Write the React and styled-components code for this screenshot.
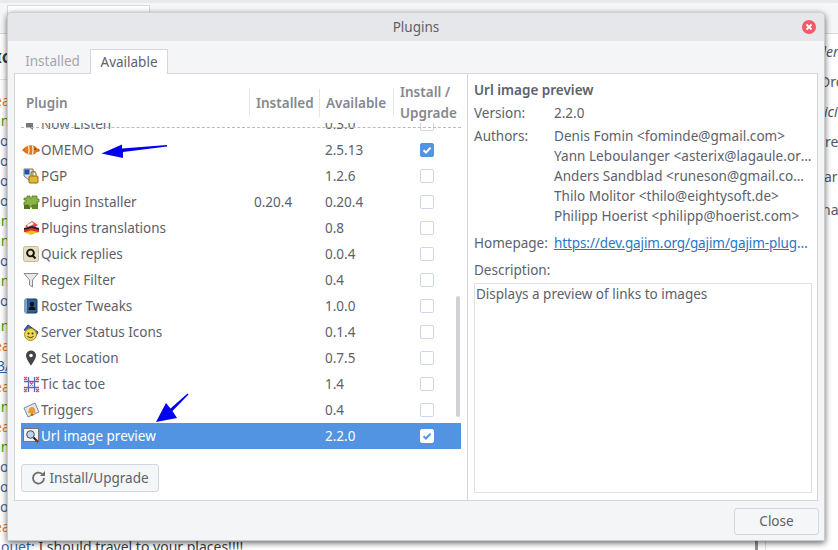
import React from "react";
import styled, { createGlobalStyle } from "styled-components";

const FONT = `"Noto Sans", sans-serif`;

const Global = createGlobalStyle`
  html, body { margin: 0; padding: 0; }
  body { width: 838px; height: 550px; overflow: hidden; background: #fff; font-family: ${FONT}; }
  * { box-sizing: border-box; }
`;

const Page = styled.div`
  position: relative;
  width: 838px;
  height: 550px;
  overflow: hidden;
  background: #fff;
  display: flex;
  flex-direction: column;
`;
const TopStrip = styled.div`
  height: 3px;
  flex: none;
  background: #e9eaec;
`;
const RoomTabs = styled.div`
  height: 31px;
  flex: none;
  background: #f5f6f7;
  border-bottom: 1px solid #d8d9dc;
  padding: 2px 0 0 7px;
`;
const RoomTab = styled.div`
  width: 143px;
  height: 28px;
  background: #fff;
  border: 1px solid #d8d9dc;
  border-bottom: 0;
`;
const RoomHead = styled.div`
  height: 46px;
  flex: none;
  border-bottom: 1px solid #e2e3e5;
  font-size: 15px;
  font-weight: 700;
  line-height: 46px;
  color: #3a3d42;
  padding-left: 0;
  margin-bottom: 11px;
  text-indent: -4px;
`;
const ChatArea = styled.div`
  flex: 1;
  min-height: 0;
  display: flex;
  justify-content: space-between;
`;
const ChatLog = styled.div`
  display: flex;
  flex-direction: column;
  width: 40px;
`;
const ChatChar = styled.div`
  height: ${p => p.$h || 20}px;
  flex: none;
  font-size: 14px;
  line-height: 20px;
  color: ${p => p.$c};
  margin-left: ${p => p.$x || 0}px;
  white-space: nowrap;
  text-decoration: ${p => p.$u ? "underline" : "none"};
`;
const RightLog = styled.div`
  position: absolute;
  left: 825px;
  top: 42px;
  width: 13px;
  display: flex;
  flex-direction: column;
  font-size: 14px;
  color: #55585f;
  line-height: 20px;
  white-space: nowrap;
`;
const RightLine = styled.div`
  height: ${p => p.$h}px;
  flex: none;
  font-style: ${p => p.$i ? "italic" : "normal"};
  margin-left: ${p => p.$x || 0}px;
`;
const BottomChat = styled.div`
  position: absolute;
  left: 1px;
  top: 537px;
  font-size: 14px;
  line-height: 20px;
  color: #3a3d42;
  white-space: nowrap;
  span { color: #3465a4; text-decoration: underline; }
`;
const BackScroll = styled.div`
  position: absolute;
  left: 755px;
  top: 535px;
  width: 11px;
  height: 15px;
  background: #fff;
  border-left: 3px solid #8f9093;
  border-right: 1px solid #dcdde0;
`;
const Dialog = styled.div`
  position: absolute;
  left: 7px;
  top: 12px;
  width: 818px;
  height: 529px;
  border-radius: 5px 5px 0 0;
  background: #f4f5f7;
  border: 1px solid #c9cacc;
  border-top-color: #cfd0d2;
  box-shadow: 0 2px 6px rgba(0,0,0,0.6);
  display: flex;
  flex-direction: column;
  color: #5c616c;
`;
const TitleBar = styled.div`
  height: 28px;
  flex: none;
  background: #e6e7ea;
  border-radius: 4px 4px 0 0;
  display: flex;
  align-items: center;
  justify-content: center;
  font-size: 13.5px;
  position: relative;
`;
const CloseDot = styled.div`
  position: absolute;
  right: 8px;
  top: 7px;
  width: 14px;
  height: 14px;
  border-radius: 50%;
  background: #f15b66;
  display: flex;
  align-items: center;
  justify-content: center;
`;
const Body = styled.div`
  flex: 1;
  min-height: 0;
  padding: 8px 6px 0 6px;
  display: flex;
  flex-direction: column;
`;
const Tabs = styled.div`
  display: flex;
  height: 24px;
  padding-left: 1px;
  flex: none;
`;
const Tab = styled.div`
  font-size: 13.5px;
  line-height: 24px;
  height: ${p => p.$active ? 25 : 24}px;
  width: ${p => p.$active ? 78 : 75}px;
  text-align: center;
  color: ${p => p.$active ? "#5c616c" : "#a3a6ac"};
  ${p => p.$active ? `
    background: #fff;
    border: 1px solid #d5d7dc;
    border-bottom: 0;
    position: relative;
    z-index: 1;
  ` : ""}
`;
const Panel = styled.div`
  height: 428px;
  flex: none;
  background: #fff;
  border: 1px solid #d5d7dc;
  display: flex;
`;
const LeftPane = styled.div`
  width: 453px;
  flex: none;
  border-right: 1px solid #d5d7dc;
  padding: 0 6px;
  display: flex;
  flex-direction: column;
  position: relative;
`;
const HeaderRow = styled.div`
  height: 49px;
  flex: none;
  display: grid;
  grid-template-columns: 228px 70px 74px 1fr;
  align-items: center;
  font-size: 13.5px;
  font-weight: 600;
  color: #85888f;
  padding-top: 8px;
`;
const HeadCell = styled.div`
  height: 28px;
  line-height: 28px;
  padding-left: ${p => p.$pad}px;
  border-left: ${p => p.$first ? "0" : "1px solid #e4e5e8"};
  white-space: nowrap;
`;
const InstallHead = styled.div`
  border-left: 1px solid #e4e5e8;
  padding-left: 6px;
  height: 28px;
  line-height: 21px;
  display: flex;
  flex-direction: column;
  justify-content: center;
  white-space: nowrap;
`;
const DropLine = styled.div`
  position: absolute;
  left: 6px;
  right: 6px;
  top: 53px;
  border-top: 1px dashed #b9bbc0;
  z-index: 2;
`;
const ListClip = styled.div`
  height: 326px;
  flex: none;
  overflow: hidden;
  position: relative;
`;
const ListInner = styled.div`
  margin-top: -12px;
`;
const Row = styled.div`
  height: 26px;
  display: grid;
  grid-template-columns: 20px 213px 71px 70px 1fr;
  align-items: center;
  font-size: 13.5px;
  color: ${p => p.$sel ? "#fff" : "#5c616c"};
  background: ${p => p.$sel ? "#5294e2" : "transparent"};
  white-space: nowrap;
`;
const IconCell = styled.div`
  display: flex;
  align-items: center;
  justify-content: center;
  height: 16px;
`;
const Cell = styled.div``;
const Check = styled.div`
  width: 14px;
  height: 14px;
  margin-left: 25px;
  border-radius: 2px;
  display: flex;
  align-items: center;
  justify-content: center;
  border: 1px solid ${p => p.$on ? "#5294e2" : "#cfd6e6"};
  background: ${p => p.$on ? "#5294e2" : "#fff"};
  ${p => p.$sel ? "border-color:#fff;background:#fff;" : ""}
`;
const ScrollThumb = styled.div`
  position: absolute;
  right: 1px;
  top: 173px;
  width: 4px;
  height: 121px;
  border-radius: 2px;
  background: #d0d1d4;
  z-index: 3;
`;
const InstallBtn = styled.button`
  margin: 15px 0 0 0;
  width: 138px;
  height: 28px;
  border: 1px solid #cfd6e6;
  border-radius: 3px;
  background: #f5f6f7;
  color: #5c616c;
  font: 400 13.5px ${FONT};
  display: flex;
  align-items: center;
  justify-content: center;
  gap: 2px;
  padding: 0;
`;
const RightPane = styled.div`
  flex: 1;
  min-width: 0;
  padding: 6px 5px 7px 6px;
  display: flex;
  flex-direction: column;
  font-size: 13.5px;
`;
const PluginName = styled.div`
  font-weight: 600;
  height: 20px;
  line-height: 20px;
`;
const InfoRow = styled.div`
  display: grid;
  grid-template-columns: 80px 1fr;
  line-height: 20px;
  margin-top: ${p => p.$mt || 3}px;
`;
const Authors = styled.div`
  display: flex;
  flex-direction: column;
`;
const Author = styled.div`
  white-space: nowrap;
  width: 258px;
  overflow: hidden;
  text-overflow: ellipsis;
  letter-spacing: 0.05px;
`;
const LinkText = styled.a`
  color: #2a76c6;
  text-decoration: underline;
  white-space: nowrap;
  display: block;
  width: 257px;
  overflow: hidden;
  text-overflow: ellipsis;
  letter-spacing: -0.1px;
`;
const DescLabel = styled.div`
  margin-top: 7px;
  line-height: 20px;
`;
const DescBox = styled.div`
  flex: 1;
  margin-top: 3px;
  border: 1px solid #dcdfe3;
  padding: 0 0 0 1px;
  line-height: 20px;
`;
const Footer = styled.div`
  flex: 1;
  display: flex;
  justify-content: flex-end;
  align-items: flex-start;
  padding-top: 7px;
  margin-right: -1px;
`;
const CloseBtn = styled.button`
  width: 85px;
  height: 27px;
  border: 1px solid #cfd6e6;
  border-radius: 3px;
  background: #f5f6f7;
  color: #5c616c;
  font: 400 13.5px ${FONT};
  padding: 0 0 2px;
`;
const ArrowLayer = styled.svg`
  position: absolute;
  left: 0;
  top: 0;
  pointer-events: none;
  z-index: 5;
`;

const Tick = ({ c }) => (
  <svg width="10" height="10" viewBox="0 0 10 10"><path d="M1.500 5.200 4 7.500 8.600 2.600" fill="none" stroke={c} strokeWidth="2" /></svg>
);

const icons = {
  listen: <svg width="16" height="16" viewBox="0 0 16 16"><path d="M3 5h3l4-3v12l-4-3H3z" fill="#777" /></svg>,
  omemo: <svg width="18" height="12" viewBox="0 0 18 12"><path d="M0 6l4-3.500v7z" fill="#d8691e" /><ellipse cx="9" cy="6" rx="6.500" ry="4.800" fill="#e8761a" /><path d="M6.500 1.800q1.200 4.200 0 8.400M10.500 1.500q1.200 4.500 0 9" stroke="#fbe9d8" strokeWidth="1.300" fill="none" /><circle cx="13" cy="5" r="0.800" fill="#222" /><circle cx="16" cy="6.200" r="1.700" fill="#d8691e" /></svg>,
  pgp: <svg width="16" height="16" viewBox="0 0 16 16"><path d="M1 1h9v6l-3 6-6-5z" fill="#dfe3ea" stroke="#777" /><path d="M1.500 1.500h5v5h-5z" fill="#2450a8" /><rect x="6" y="8" width="9" height="7" rx="1" fill="#e0b93a" stroke="#8a6c10" /><path d="M8 8V6a2.500 2.500 0 0 1 5 0v2" fill="none" stroke="#a58820" strokeWidth="1.300" /></svg>,
  puzzle: <svg width="17" height="16" viewBox="0 0 17 16"><rect x="1" y="9" width="6" height="6" fill="#4f7420" /><rect x="9" y="9" width="6" height="6" fill="#5f8a28" /><path d="M1 4h3V2h3v2h2V2h5v3h2v3h-2v3H9v2H6v-2H1V8h2V6H1z" fill="#8ab34a" stroke="#55781f" strokeWidth="0.800" /></svg>,
  flags: <svg width="17" height="16" viewBox="0 0 17 16"><path d="M2 6l7-5 6 4-7 5z" fill="#e24b4b" /><path d="M4 5l5-3 2 2-6 3z" fill="#f4f4f4" /><path d="M1 8l8-2 7 2v2l-8 2-7-2z" fill="#222" /><path d="M1 10l8-2 7 2v2l-8 2-7-2z" fill="#d33" /><path d="M2 12.500l6-2 7 1.500-7 3z" fill="#f0c020" /></svg>,
  quick: <svg width="16" height="16" viewBox="0 0 16 16"><rect x="0.500" y="0.500" width="15" height="15" rx="2" fill="#e9dfc0" stroke="#c5bb99" /><circle cx="7.500" cy="7" r="3.400" fill="none" stroke="#111" strokeWidth="1.900" /><path d="M9 9l3.500 3.500" stroke="#111" strokeWidth="2" /></svg>,
  filter: <svg width="16" height="16" viewBox="0 0 16 16"><path d="M1 1.500h14L9.500 8v7L6.500 13V8z" fill="#e8e8e8" stroke="#8b8b8b" /></svg>,
  roster: <svg width="16" height="16" viewBox="0 0 16 16"><rect x="2" y="1" width="12" height="14" rx="1" fill="#2d5f95" stroke="#1d3c60" /><rect x="2" y="1" width="2" height="14" fill="#7aa0c6" /><circle cx="9" cy="6" r="2.200" fill="#111" /><path d="M5.500 12c0-5 7-5 7 0z" fill="#111" /></svg>,
  status: <svg width="17" height="17" viewBox="0 0 17 17"><path d="M1 6l4-5 10 7-2 4z" fill="#3768b0" stroke="#24477c" /><circle cx="7.500" cy="10.500" r="6" fill="#f2d94b" stroke="#a58c20" /><circle cx="5.500" cy="9.500" r="1" fill="#333" /><circle cx="9.500" cy="9.500" r="1" fill="#333" /><path d="M4.500 12.500q3 2.500 6 0" fill="none" stroke="#333" /></svg>,
  pin: <svg width="16" height="16" viewBox="0 0 16 16"><path d="M8 0.500a5 5 0 0 1 5 5c0 3.500-5 10-5 10s-5-6.500-5-10a5 5 0 0 1 5-5z" fill="#444" /><circle cx="8" cy="5.500" r="1.800" fill="#fff" /></svg>,
  tic: <svg width="17" height="17" viewBox="0 0 17 17"><path d="M5.500 1v15M11.500 1v15M1 5.500h15M1 11.500h15" stroke="#4c6cc0" strokeWidth="1.300" /><path d="M1 1l3 3M4 1L1 4M13 1l3 3M16 1l-3 3M7 6.500l3 3M10 6.500l-3 3M1 13l3 3M4 13l-3 3M13 13l3 3M16 13l-3 3" stroke="#e0484f" strokeWidth="1.200" /></svg>,
  triggers: <svg width="17" height="16" viewBox="0 0 17 16"><path d="M1 6l11-5 4 9-11 5z" fill="#dfe6f2" stroke="#7a8ba8" /><path d="M9 5c3 0 3 3 3.500 6H5c1-3 1-6 4-6z" fill="#ec9a2e" /><circle cx="9" cy="12.500" r="1.500" fill="#c76a10" /></svg>,
  url: <svg width="17" height="16" viewBox="0 0 17 16"><rect x="0.500" y="0.500" width="15" height="13" fill="#f2f2f2" stroke="#777" /><circle cx="7.500" cy="6.500" r="3.800" fill="#bcd4ee" stroke="#4a4a4a" /><path d="M10.500 9.500l4.500 4.500" stroke="#222" strokeWidth="2" /><path d="M13 12l2 2" stroke="#a03020" strokeWidth="2" /></svg>,
};

const rows = [
  ["listen", "Now Listen", "", "0.3.0", false],
  ["omemo", "OMEMO", "", "2.5.13", true],
  ["pgp", "PGP", "", "1.2.6", false],
  ["puzzle", "Plugin Installer", "0.20.4", "0.20.4", false],
  ["flags", "Plugins translations", "", "0.8", false],
  ["quick", "Quick replies", "", "0.0.4", false],
  ["filter", "Regex Filter", "", "0.4", false],
  ["roster", "Roster Tweaks", "", "1.0.0", false],
  ["status", "Server Status Icons", "", "0.1.4", false],
  ["pin", "Set Location", "", "0.7.5", false],
  ["tic", "Tic tac toe", "", "1.4", false],
  ["triggers", "Triggers", "", "0.4", false],
  ["url", "Url image preview", "", "2.2.0", true, true],
];

const EA = ["ea", "#e8801f", -6];
const AN = ["an", "#4e9a06", -7];
const OO = ["o", "#3465a4", 0];
const leftChars = [
  EA, AN, OO, OO, OO, OO, AN, AN, OO, AN, [...OO, 25], AN, EA,
  ["3/", "#3465a4", -3, 21, true], EA, AN, EA, AN, OO, OO, OO, [...EA, 30],
];

const rightLines = [
  ["der", 30, true, -7], ["Dro", 30, false, -5], ["ici", 30, true, -1],
  ["re", 35, false, 0], ["arl", 33, false, -1], ["na", 20, false, -3],
];

export default function App() {
  return (
    <Page>
      <Global />
      <TopStrip />
      <RoomTabs><RoomTab /></RoomTabs>
      <RoomHead>IC</RoomHead>
      <ChatArea>
        <ChatLog>
          {leftChars.map((c, i) => <ChatChar key={i} $c={c[1]} $x={c[2]} $h={c[3]} $u={c[4]}>{c[0]}</ChatChar>)}
        </ChatLog>
      </ChatArea>
      <RightLog>
        {rightLines.map((l) => <RightLine key={l[0]} $h={l[1]} $i={l[2]} $x={l[3]}>{l[0]}</RightLine>)}
      </RightLog>
      <BottomChat><span>ouet:</span> I should travel to your places!!!!</BottomChat>
      <BackScroll />
      <Dialog>
        <TitleBar>
          Plugins
          <CloseDot>
            <svg width="8" height="8" viewBox="0 0 8 8"><path d="M1.500 1.500l5 5M6.500 1.500l-5 5" stroke="#fff" strokeWidth="2" /></svg>
          </CloseDot>
        </TitleBar>
        <Body>
          <Tabs>
            <Tab>Installed</Tab>
            <Tab $active>Available</Tab>
          </Tabs>
          <Panel>
            <LeftPane>
              <HeaderRow>
                <HeadCell $first $pad={5}>Plugin</HeadCell>
                <HeadCell $pad={6}>Installed</HeadCell>
                <HeadCell $pad={6}>Available</HeadCell>
                <InstallHead><span>Install /</span><span>Upgrade</span></InstallHead>
              </HeaderRow>
              <DropLine />
              <ListClip>
                <ListInner>
                  {rows.map((r) => (
                    <Row key={r[1]} $sel={r[5]}>
                      <IconCell>{icons[r[0]]}</IconCell>
                      <Cell>{r[1]}</Cell>
                      <Cell>{r[2]}</Cell>
                      <Cell>{r[3]}</Cell>
                      <Check $on={r[4]} $sel={r[5]}>
                        {r[4] && <Tick c={r[5] ? "#5294e2" : "#fff"} />}
                      </Check>
                    </Row>
                  ))}
                </ListInner>
                <ScrollThumb />
              </ListClip>
              <InstallBtn>
                <svg width="16" height="16" viewBox="0 0 16 16"><path d="M13 8a5.500 5.500 0 1 1-1.800-4" fill="none" stroke="#6f6f6f" strokeWidth="1.800" /><path d="M14 1v5H9z" fill="#6f6f6f" /></svg>
                Install/Upgrade
              </InstallBtn>
            </LeftPane>
            <RightPane>
              <PluginName>Url image preview</PluginName>
              <InfoRow><span>Version:</span><span>2.2.0</span></InfoRow>
              <InfoRow>
                <span>Authors:</span>
                <Authors>
                  <Author>Denis Fomin &lt;fominde@gmail.com&gt;</Author>
                  <Author>Yann Leboulanger &lt;asterix@lagaule.org&gt;</Author>
                  <Author>Anders Sandblad &lt;runeson@gmail.com&gt;</Author>
                  <Author>Thilo Molitor &lt;thilo@eightysoft.de&gt;</Author>
                  <Author>Philipp Hoerist &lt;philipp@hoerist.com&gt;</Author>
                </Authors>
              </InfoRow>
              <InfoRow $mt={7}><span>Homepage:</span><LinkText>https://dev.gajim.org/gajim/gajim-plugins/wikis</LinkText></InfoRow>
              <DescLabel>Description:</DescLabel>
              <DescBox>Displays a preview of links to images</DescBox>
            </RightPane>
          </Panel>
          <Footer><CloseBtn>Close</CloseBtn></Footer>
        </Body>
      </Dialog>
      <ArrowLayer width="838" height="550" viewBox="0 0 838 550">
        <path d="M167 145 L167 146.500 L123 152 L123 158 L101.500 153.500 L122 144.500 L122 148.500 Z" fill="#0000ee" />
        <path d="M187.500 393.500 L188.500 394.500 L172.500 411 L177 418 L156 422 L166 403 L170.500 408.500 Z" fill="#0000ee" />
      </ArrowLayer>
    </Page>
  );
}
